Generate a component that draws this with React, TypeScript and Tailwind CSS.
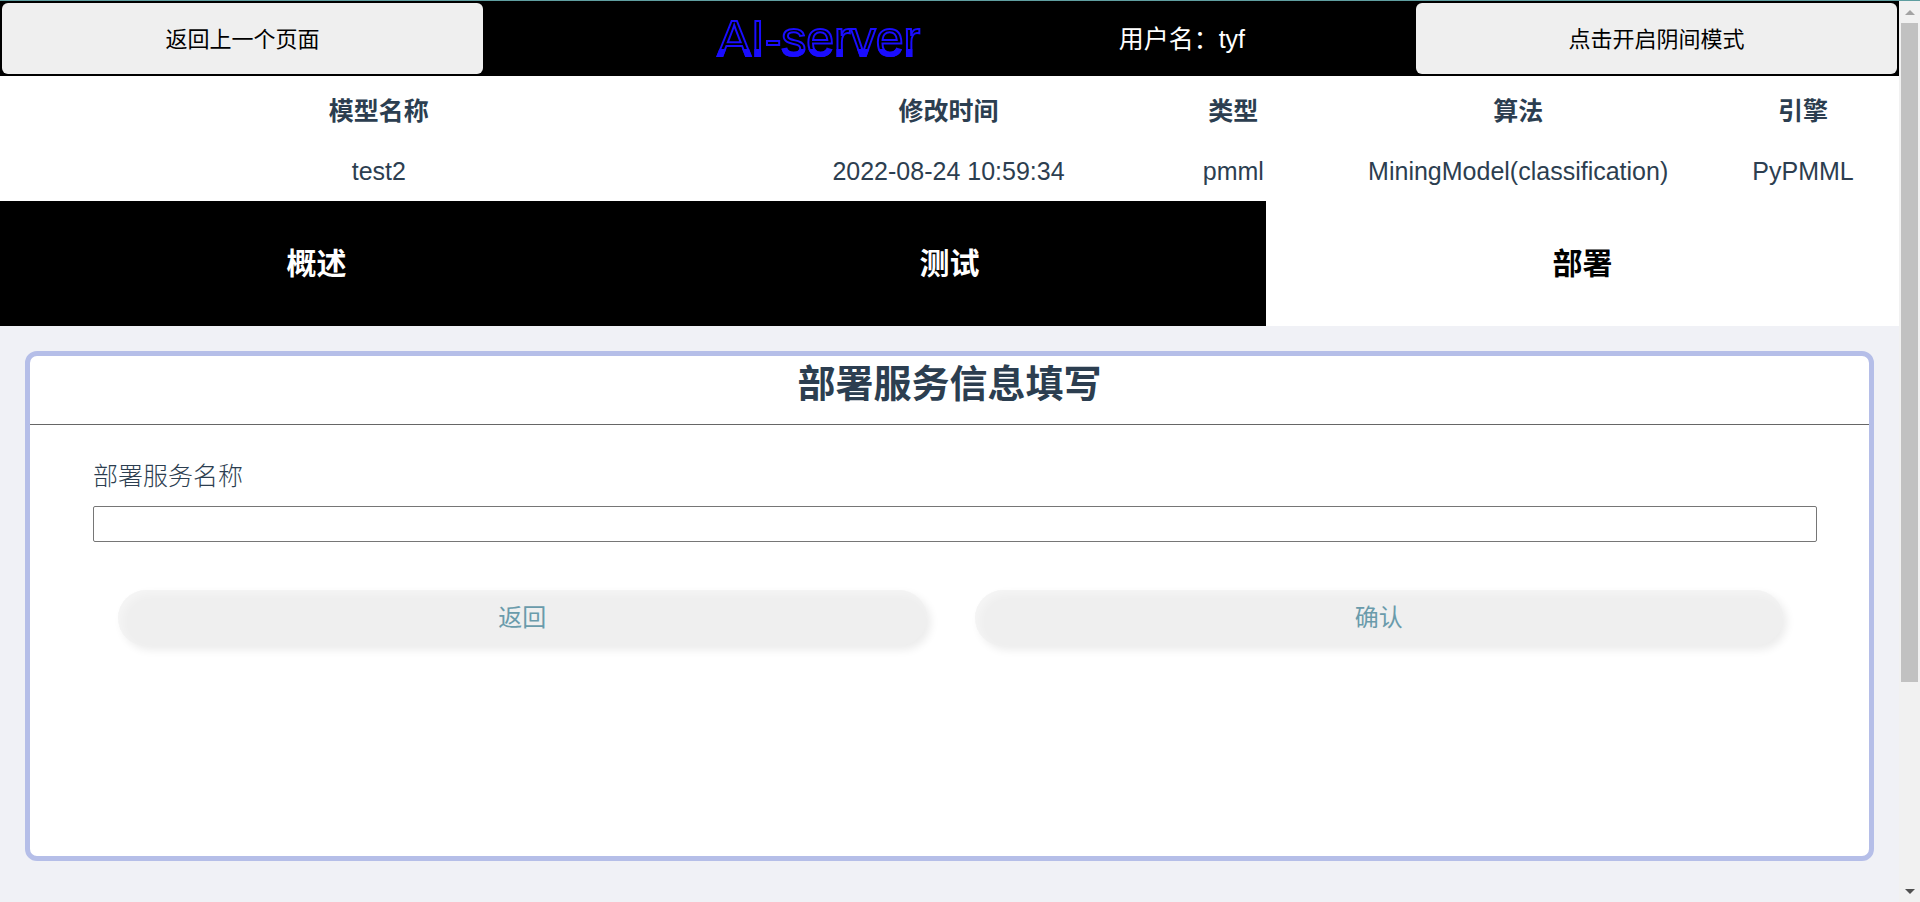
import { useState } from "react";

const columns = [
  { title: "模型名称", value: "test2", width: "w-[40%]" },
  { title: "修改时间", value: "2022-08-24 10:59:34", width: "w-[20%]" },
  { title: "类型", value: "pmml", width: "w-[10%]" },
  { title: "算法", value: "MiningModel(classification)", width: "w-[20%]" },
  { title: "引擎", value: "PyPMML", width: "w-[10%]" },
];

const tabs = ["概述", "测试", "部署"];

function Header() {
  return (
    <header className="flex h-[75px] items-stretch bg-black p-0.5 text-[25px] text-white">
      <button type="button" className="w-[481px] rounded-md bg-[#efefef] pt-0.5 text-[22px] text-black">
        返回上一个页面
      </button>
      <div className="grid flex-1 grid-cols-[635fr_297fr] items-center">
        <h1 className="bg-[linear-gradient(to_bottom,transparent_67%,#1a0dff_67%)] bg-clip-text pl-9 text-center text-[50px] leading-[58px] text-transparent [-webkit-text-stroke:2px_#1a0dff]">
          AI-server
        </h1>
        <p className="pt-0.5">用户名：tyf</p>
      </div>
      <button type="button" className="w-[481px] rounded-md bg-[#efefef] pt-0.5 text-[22px] text-black">
        点击开启阴间模式
      </button>
    </header>
  );
}

function ModelTable() {
  return (
    <table className="w-full table-fixed bg-white text-center text-[25px]">
      <thead>
        <tr className="h-[68px]">
          {columns.map((c) => (
            <th key={c.title} scope="col" className={`${c.width} pt-1 pr-0.5`}>
              {c.title}
            </th>
          ))}
        </tr>
      </thead>
      <tbody>
        <tr className="h-[57px]">
          {columns.map((c) => (
            <td key={c.title} className="pr-0.5 pb-0.5">
              {c.value}
            </td>
          ))}
        </tr>
      </tbody>
    </table>
  );
}

function ActionButton({ label }: { label: string }) {
  return (
    <button
      type="button"
      className="h-14 flex-1 rounded-full bg-[#efefef] text-[24px] text-[#6a9bab] shadow-[4px_4px_8px_#00000014,-4px_-4px_8px_#ffffff,inset_4px_4px_8px_#ffffff66]"
    >
      {label}
    </button>
  );
}

function DeployForm() {
  return (
    <form
      className="m-[25px] min-h-[510px] rounded-xl border-[5px] border-[#b5bee8] bg-white"
      onSubmit={(e) => e.preventDefault()}
    >
      <h2 className="h-[69px] border-b border-[#666666] text-center text-[38px] leading-[56px] font-bold">
        部署服务信息填写
      </h2>
      <div className="pt-[33px] pr-[52px] pl-[63px]">
        <label htmlFor="service-name" className="block pb-3 text-[25px] leading-9 font-light">
          部署服务名称
        </label>
        <input
          id="service-name"
          type="text"
          className="block h-9 w-full rounded-xs border border-[#767676] bg-white px-1 text-[22px]"
        />
        <div className="mt-12 flex gap-12 pr-[34px] pl-[25px]">
          <ActionButton label="返回" />
          <ActionButton label="确认" />
        </div>
      </div>
    </form>
  );
}

function ScrollRail() {
  return (
    <div aria-hidden="true" className="flex w-[21px] flex-col items-center bg-[#f1f1f1]">
      <svg className="h-[22px] w-[21px]" viewBox="0 0 21 22">
        <path d="M6 14h10l-5-5z" fill="#a3a3a3" />
      </svg>
      <div className="w-[17px] flex-[659] bg-[#c1c1c1]" />
      <div className="flex-[198]" />
      <svg className="h-[22px] w-[21px]" viewBox="0 0 21 22">
        <path d="M6 9h10l-5 5z" fill="#505050" />
      </svg>
    </div>
  );
}

export default function App() {
  const [active, setActive] = useState(2);
  return (
    <div className="flex min-h-screen border-t border-[#5f9ea0] bg-[#f0f1f6] font-['Liberation_Sans','Noto_Sans_CJK_SC',sans-serif] text-[#2c3e50]">
      <div className="min-w-0 flex-1">
        <Header />
        <ModelTable />
        <nav className="grid h-[125px] grid-cols-3">
          {tabs.map((tab, i) => (
            <button
              key={tab}
              type="button"
              onClick={() => setActive(i)}
              className={
                i === active
                  ? "bg-white text-[30px] font-bold text-black"
                  : "bg-black text-[30px] font-bold text-white"
              }
            >
              {tab}
            </button>
          ))}
        </nav>
        <DeployForm />
      </div>
      <ScrollRail />
    </div>
  );
}
